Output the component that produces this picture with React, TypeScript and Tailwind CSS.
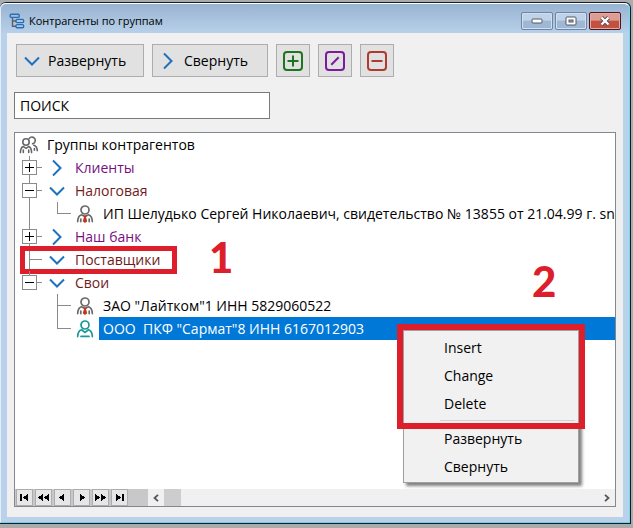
import type { ReactNode } from "react";

type ChevronProps = { open?: boolean };

function Chevron({ open }: ChevronProps) {
  return (
    <svg width="20" height="20" viewBox="0 0 20 20" fill="none" stroke="#1f70bd" strokeWidth="2" className="shrink-0" aria-hidden="true">
      {open ? <path d="M3 6.5 L10 13.5 L17 6.5" /> : <path d="M6 2.5 L13.5 10 L6 17.5" />}
    </svg>
  );
}

function TitleIcon() {
  return (
    <svg width="16" height="16" viewBox="0 0 16 16" fill="none" stroke="#2a6fb5" strokeWidth="1.4" className="shrink-0" aria-hidden="true">
      <rect x="1.2" y="1.2" width="9" height="3.2" rx="1" />
      <rect x="7" y="6.4" width="7.6" height="3.2" rx="1" />
      <rect x="7" y="11.6" width="7.6" height="3.2" rx="1" />
      <path d="M3.5 5v8.2h3.5M3.5 8h3.5" stroke="#55606c" />
    </svg>
  );
}

function PersonIcon({ teal }: { teal?: boolean }) {
  const color = teal ? "#189898" : "#6b6b6b";
  return (
    <svg width="18" height="18" viewBox="0 0 18 18" fill="none" stroke={color} strokeWidth="1.7" strokeLinecap="round" className="shrink-0" aria-hidden="true">
      <circle cx="9" cy="5" r="4" />
      {teal ? (
        <path d="M1.7 16.6c.1-3.8 1.4-6 3.8-6.8L9 12.4l3.5-2.6c2.4.8 3.7 3 3.8 6.8M5 16.4h8" />
      ) : (
        <>
          <path d="M1.7 16.6c.1-3.8 1.4-6 3.8-6.8L9 11.6l3.5-1.8c2.4.8 3.7 3 3.8 6.8M4.8 14v2.6M13.2 14v2.6" />
          <path d="M7.2 10.4h3.6l-.8 1.8 1.3 4L9 18l-2.3-1.8 1.3-4z" fill="#c2371f" stroke="none" />
        </>
      )}
    </svg>
  );
}

function PeopleIcon() {
  return (
    <svg width="20" height="18" viewBox="0 0 20 18" fill="none" stroke="#666" strokeWidth="1.6" strokeLinecap="round" className="shrink-0" aria-hidden="true">
      <circle cx="7" cy="6" r="3.2" />
      <path d="M1.4 16.6c.1-3.6 1-5.3 3-6l2.6 1.8 2.6-1.8c2 .7 2.9 2.4 3 6M4.3 14v2.4M9.7 14v2.4" />
      <path d="M10.2 2.4a3.4 3.4 0 1 1 3.4 5.4M14.8 9.2c2.4.6 3.3 2.2 3.5 5.4M15.4 12.6v1.6" />
    </svg>
  );
}

function SquareIcon({ kind }: { kind: "add" | "edit" | "remove" }) {
  const color = kind === "add" ? "#1d751d" : kind === "edit" ? "#7d1a9c" : "#b03a2c";
  return (
    <svg width="22" height="22" viewBox="0 0 22 22" fill="none" stroke={color} strokeWidth="2" aria-hidden="true">
      <rect x="2" y="2" width="18" height="18" rx="3" />
      {kind === "add" && <path d="M5.5 11h11M11 5.5v11" />}
      {kind === "edit" && <path d="M7.3 14.7l7.4-7.4" />}
      {kind === "remove" && <path d="M5.5 11h11" />}
    </svg>
  );
}

function WindowButton({ label, close, children }: { label: string; close?: boolean; children: ReactNode }) {
  return (
    <button
      type="button"
      aria-label={label}
      className={
        close
          ? "flex h-[18px] w-8 items-center justify-center rounded-xs border border-[#4a1822] bg-linear-to-b from-[#dc9d92] from-45% to-[#c2513f] to-50% inset-ring inset-ring-[#e5aaa0]"
          : "flex h-[18px] w-8 items-center justify-center rounded-xs border border-[#6d84a3] bg-linear-to-b from-[#bfd2e8] from-45% to-[#9db7d4] to-50% inset-ring inset-ring-[#d0e0f1]"
      }
    >
      {children}
    </button>
  );
}

const toolButton = "flex h-[33px] items-center border border-[#adadad] bg-[#e1e1e1]";

/* Gutter that holds the branch lines of the first level. */
function Branch({ kind }: { kind: "plus" | "minus" | "last" | "leaf" | "through" }) {
  const art = (
    <svg width="22" height="23" viewBox="0 0 22 23" fill="none" stroke="#8a8a8a" shapeRendering="crispEdges" className="block" aria-hidden="true">
      <path d={kind === "last" ? "M8.5 0V11" : "M8.5 0V23"} />
      {kind !== "through" && <path d="M8 11.5H21" />}
      {(kind === "plus" || kind === "minus" || kind === "last") && (
        <>
          <rect x="1.5" y="4.5" width="14" height="14" fill="#fff" />
          <path d={kind === "plus" ? "M4 11.5H13M8.5 7V16" : "M4 11.5H13"} stroke="#000" />
        </>
      )}
    </svg>
  );
  if (kind === "through" || kind === "leaf") return art;
  return (
    <button type="button" aria-label={kind === "plus" ? "Развернуть ветку" : "Свернуть ветку"} className="block">
      {art}
    </button>
  );
}

function ChildBranch({ last }: { last?: boolean }) {
  return (
    <svg width="16" height="23" viewBox="0 0 16 23" fill="none" stroke="#8a8a8a" shapeRendering="crispEdges" className="shrink-0" aria-hidden="true">
      <path d={last ? "M1.5 0V11.5H15" : "M1.5 0V23M1 11.5H15"} />
    </svg>
  );
}

function GroupRow({ kind, open, name, children }: { kind: "plus" | "minus" | "last" | "leaf"; open?: boolean; name: string; children?: ReactNode }) {
  return (
    <li className="relative flex h-[23px] items-center gap-1 pl-[6px]">
      <div className="w-[22px] shrink-0">
        <Branch kind={kind} />
      </div>
      <div className="flex items-center gap-2">
        <Chevron open={open} />
        <span className={open ? "text-[#701c1c]" : "text-[#780f80]"}>{name}</span>
      </div>
      {children}
    </li>
  );
}

function PartyRow({ name, last, through, selected, children }: { name: string; last?: boolean; through?: boolean; selected?: boolean; children?: ReactNode }) {
  return (
    <li className="relative flex h-[23px] items-center pl-[6px]">
      <div className="w-[35px] shrink-0">{through && <Branch kind="through" />}</div>
      <ChildBranch last={last} />
      <div className="w-[27px] shrink-0 pl-1">
        <PersonIcon teal={selected} />
      </div>
      <span className={selected ? "flex-1 bg-[#0078d7] pl-1 leading-[23px] text-white" : "pl-1"}>{name}</span>
      {children}
    </li>
  );
}

const navGlyphs = [
  { label: "Первая", d: "M3 4h2v7H3zM11 4v7L6 7.5z" },
  { label: "Страница назад", d: "M7 4v7L2 7.5zM13 4v7L8 7.5z" },
  { label: "Назад", d: "M9 4v7L4 7.5z" },
  { label: "Вперёд", d: "M6 4v7l5-3.5z" },
  { label: "Страница вперёд", d: "M2 4v7l5-3.5zM8 4v7l5-3.5z" },
  { label: "Последняя", d: "M4 4v7l5-3.5zM10 4h2v7h-2z" },
];

const menuItem = "block h-7 w-full pl-10 text-left";

function ContextMenu() {
  return (
    <div className="absolute top-[13px] left-[388px] z-10 w-[176px] border border-[#a0a0a0] bg-[#f1f1f1] py-[2px] text-black shadow-[3px_3px_3px_rgba(0,0,0,0.5)]">
      <button type="button" className={menuItem}>Insert</button>
      <button type="button" className={menuItem}>Change</button>
      <button type="button" className={menuItem}>Delete</button>
      <hr className="my-[3px] mr-[3px] ml-9 border-[#d2d2d2]" />
      <button type="button" className={menuItem}>Развернуть</button>
      <button type="button" className={menuItem}>Свернуть</button>
    </div>
  );
}

export default function App() {
  return (
    <div className="flex min-h-screen flex-col bg-[#ababab] pt-[2px] pr-[2px] pb-1 font-['Open_Sans','Noto_Sans',sans-serif] text-sm text-black">
      <main className="flex flex-1 flex-col rounded-t-md border-t border-r border-b border-[#10202a] bg-[#b9d1ea]">
        <div className="flex flex-1 flex-col rounded-t-md border border-t-white border-r-[#6fdcf0] border-b-[#6fd2ea] border-l-[#e4eef8] bg-linear-to-b from-[#99b4d1] to-[#b9d1ea] to-[30px] px-[6px] pb-[5px]">
          <header className="flex h-[29px] items-center pt-1 pl-[2px]">
            <TitleIcon />
            <h1 className="flex-1 pl-1 text-[11px]">Контрагенты по группам</h1>
            <div className="flex gap-[2px] pr-[2px]">
              <WindowButton label="Свернуть окно">
                <svg width="12" height="6" aria-hidden="true">
                  <rect x="1" y="1" width="10" height="4" rx="1" fill="#fff" stroke="#515866" />
                </svg>
              </WindowButton>
              <WindowButton label="Развернуть окно">
                <svg width="12" height="10" fill="none" aria-hidden="true">
                  <rect x="1" y="1" width="10" height="8" rx="1" fill="#fff" stroke="#515866" />
                  <rect x="4" y="4" width="4" height="2" fill="#9db7d4" stroke="#515866" />
                </svg>
              </WindowButton>
              <WindowButton label="Закрыть" close>
                <svg width="12" height="10" fill="none" aria-hidden="true">
                  <path d="M2.5 1.5l7 7M9.5 1.5l-7 7" stroke="#5e4450" strokeWidth="4" />
                  <path d="M2.5 1.5l7 7M9.5 1.5l-7 7" stroke="#fff" strokeWidth="2.4" />
                </svg>
              </WindowButton>
            </div>
          </header>

          <div className="flex flex-1 flex-col bg-[#f0f0f0] px-[7px] pt-[11px] pb-[10px]">
            <div className="flex gap-2 pl-[2px]">
              <button type="button" className={`${toolButton} w-32 gap-[6px] pl-[5px]`}>
                <Chevron open />
                Развернуть
              </button>
              <button type="button" className={`${toolButton} w-[116px] gap-[6px] pl-[5px]`}>
                <Chevron />
                Свернуть
              </button>
              <button type="button" aria-label="Добавить" className={`${toolButton} w-[34px] justify-center`}>
                <SquareIcon kind="add" />
              </button>
              <button type="button" aria-label="Изменить" className={`${toolButton} w-[34px] justify-center`}>
                <SquareIcon kind="edit" />
              </button>
              <button type="button" aria-label="Удалить" className={`${toolButton} w-[34px] justify-center`}>
                <SquareIcon kind="remove" />
              </button>
            </div>

            <input
              type="text"
              aria-label="Поиск"
              defaultValue="ПОИСК"
              className="mt-[15px] h-[27px] w-64 border border-[#7a7a7a] bg-white px-[5px] outline-none"
            />

            <section className="mt-[13px] flex flex-1 flex-col border border-[#828790] bg-white">
              <ul className="min-w-0 flex-1 overflow-hidden leading-[23px] whitespace-pre">
                <li className="flex h-[23px] items-center gap-2 pl-1">
                  <PeopleIcon />
                  Группы контрагентов
                </li>
                <GroupRow kind="plus" name="Клиенты" />
                <GroupRow kind="minus" open name="Налоговая" />
                <PartyRow through last name="ИП Шелудько Сергей Николаевич, свидетельство № 13855 от 21.04.99 г. sn" />
                <GroupRow kind="plus" name="Наш банк" />
                <GroupRow kind="leaf" open name="Поставщики">
                  <div className="absolute top-[-2px] left-[5px] h-7 w-[157px] border-[5px] border-[#dc1f2b]" />
                  <b className="absolute top-[-12px] left-[194px] font-['Lato',sans-serif] text-[42px] leading-none font-black text-[#dc1f2b]">1</b>
                </GroupRow>
                <GroupRow kind="last" open name="Свои" />
                <PartyRow name={'ЗАО "Лайтком"1 ИНН 5829060522'} />
                <PartyRow last selected name={'ООО  ПКФ "Сармат"8 ИНН 6167012903'}>
                  <ContextMenu />
                  <div className="pointer-events-none absolute top-[7px] left-[382px] z-20 h-[105px] w-[188px] border-6 border-[#dc1f2b]" />
                  <b className="absolute top-[-57px] left-[517px] font-['Lato',sans-serif] text-[42px] leading-none font-black text-[#dc1f2b]">2</b>
                </PartyRow>
              </ul>

              <footer className="flex h-[17px] bg-[#f0f0f0]">
                <div className="flex w-[133px] shrink-0 gap-[2px] bg-[#c8c8c8] pl-px">
                  {navGlyphs.map((glyph) => (
                    <button key={glyph.label} type="button" aria-label={glyph.label} className="flex h-[17px] w-[17px] items-center justify-center border border-[#adadad] bg-[#e6e6e6]">
                      <svg width="15" height="15" viewBox="0 0 15 15" shapeRendering="crispEdges" aria-hidden="true">
                        <path d={glyph.d} />
                      </svg>
                    </button>
                  ))}
                </div>
                <button type="button" aria-label="Прокрутить влево" className="flex w-4 items-center justify-center">
                  <svg width="8" height="8" fill="none" stroke="#555" strokeWidth="1.8" aria-hidden="true">
                    <path d="M6 .8L2.5 4L6 7.2" />
                  </svg>
                </button>
                <div className="flex flex-1">
                  <div className="w-[17px] bg-[#cdcdcd]" />
                </div>
                <button type="button" aria-label="Прокрутить вправо" className="flex w-[17px] items-center justify-center">
                  <svg width="8" height="8" fill="none" stroke="#555" strokeWidth="1.8" aria-hidden="true">
                    <path d="M2 .8L5.5 4L2 7.2" />
                  </svg>
                </button>
              </footer>
            </section>
          </div>
        </div>
      </main>
    </div>
  );
}
